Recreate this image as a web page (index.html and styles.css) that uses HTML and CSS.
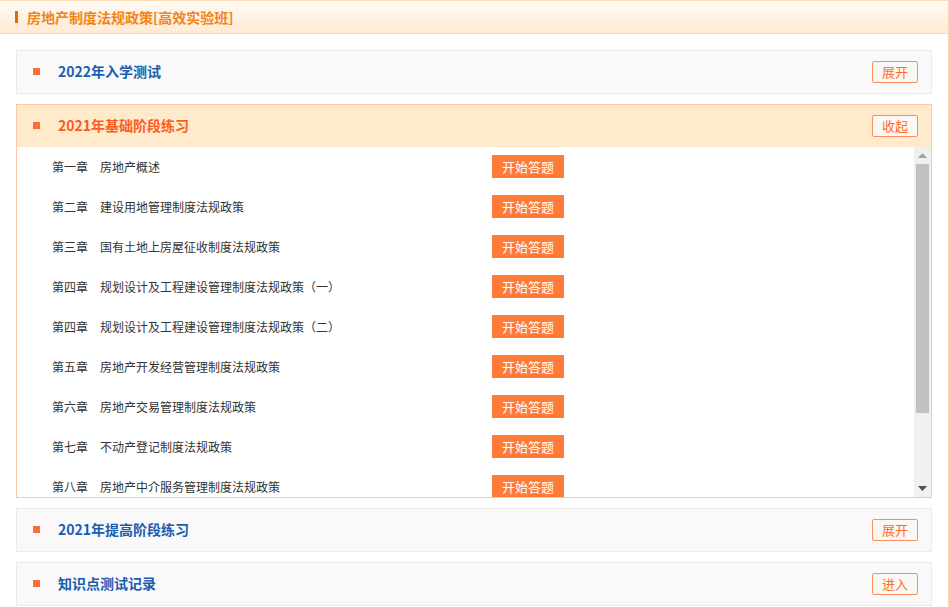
FILE: index.html
```html
<!DOCTYPE html>
<html lang="zh-CN">
<head>
<meta charset="utf-8">
<title>房地产制度法规政策[高效实验班]</title>
<link rel="stylesheet" href="styles.css">
</head>
<body>
<div class="page">
  <div class="page-head">
    <span class="head-bar"></span>
    <span class="head-title">房地产制度法规政策[高效实验班]</span>
  </div>
  <div class="content">
    <div class="section">
      <div class="sec-head">
        <span class="dot"></span>
        <span class="sec-title">2022年入学测试</span>
        <span class="sec-btn">展开</span>
      </div>
    </div>

    <div class="section open">
      <div class="sec-head">
        <span class="dot"></span>
        <span class="sec-title">2021年基础阶段练习</span>
        <span class="sec-btn">收起</span>
      </div>
      <div class="list-wrap">
        <div class="list">
          <div class="row"><span class="chap">第一章</span><span class="name">房地产概述</span><span class="go">开始答题</span></div>
          <div class="row"><span class="chap">第二章</span><span class="name">建设用地管理制度法规政策</span><span class="go">开始答题</span></div>
          <div class="row"><span class="chap">第三章</span><span class="name">国有土地上房屋征收制度法规政策</span><span class="go">开始答题</span></div>
          <div class="row"><span class="chap">第四章</span><span class="name">规划设计及工程建设管理制度法规政策（一）</span><span class="go">开始答题</span></div>
          <div class="row"><span class="chap">第四章</span><span class="name">规划设计及工程建设管理制度法规政策（二）</span><span class="go">开始答题</span></div>
          <div class="row"><span class="chap">第五章</span><span class="name">房地产开发经营管理制度法规政策</span><span class="go">开始答题</span></div>
          <div class="row"><span class="chap">第六章</span><span class="name">房地产交易管理制度法规政策</span><span class="go">开始答题</span></div>
          <div class="row"><span class="chap">第七章</span><span class="name">不动产登记制度法规政策</span><span class="go">开始答题</span></div>
          <div class="row"><span class="chap">第八章</span><span class="name">房地产中介服务管理制度法规政策</span><span class="go">开始答题</span></div>
        </div>
        <div class="scrollbar">
          <div class="sb-btn">
            <svg width="9" height="5" viewBox="0 0 9 5"><polygon points="4.5,0 9,5 0,5" fill="#a3a3a3"/></svg>
          </div>
          <div class="sb-track">
            <div class="sb-thumb"></div>
          </div>
          <div class="sb-btn">
            <svg width="9" height="5" viewBox="0 0 9 5"><polygon points="0,0 9,0 4.5,5" fill="#505050"/></svg>
          </div>
        </div>
      </div>
    </div>

    <div class="section">
      <div class="sec-head">
        <span class="dot"></span>
        <span class="sec-title">2021年提高阶段练习</span>
        <span class="sec-btn">展开</span>
      </div>
    </div>

    <div class="section">
      <div class="sec-head">
        <span class="dot"></span>
        <span class="sec-title">知识点测试记录</span>
        <span class="sec-btn">进入</span>
      </div>
    </div>
  </div>
</div>
</body>
</html>
```

FILE: styles.css
```css
html, body {
  margin: 0;
  padding: 0;
  background: #ffffff;
}
body {
  font-family: "Noto Sans CJK SC", "Noto Sans", sans-serif;
  color: #333333;
  overflow: hidden;
}
.page {
  width: 948px;
  height: 607px;
  border-right: 1px solid #fcd9b6;
}
.page-head {
  height: 32px;
  box-sizing: content-box;
  border-top: 1px solid #fdd8b4;
  border-bottom: 1px solid #fcd6b2;
  background: linear-gradient(#fffaf4, #ffe9d4);
  display: flex;
  align-items: center;
  padding-left: 15px;
}
.head-bar {
  width: 3px;
  height: 12px;
  background: #e06c00;
  margin-right: 9px;
}
.head-title {
  font-size: 14px;
  font-weight: bold;
  color: #f08518;
  margin-bottom: 1px;
}
.content {
  padding: 16px 16px 0 16px;
  display: flex;
  flex-direction: column;
  gap: 10px;
}
.section {
  border: 1px solid #ebebeb;
  background: #f9f9f9;
}
.sec-head {
  height: 42px;
  box-sizing: border-box;
  display: flex;
  align-items: center;
  padding: 0 13px 1px 16px;
}
.dot {
  width: 7px;
  height: 7px;
  background: #ff6a36;
  margin-right: 18px;
  flex: none;
}
.sec-title {
  font-size: 14px;
  font-weight: bold;
  color: #1a5daf;
  flex: 1;
  margin-bottom: 1px;
}
.sec-btn {
  width: 44px;
  height: 20px;
  line-height: 20px;
  text-align: center;
  border: 1px solid #ff8c5e;
  border-radius: 2px;
  background: #faf8f2;
  color: #ff6a2c;
  font-size: 13px;
}
.section.open {
  border-color: #fbc8a6;
  background: #ffffff;
}
.section.open .sec-head {
  background: #ffebcc;
}
.section.open .sec-title {
  color: #ff5a1e;
}
.list-wrap {
  height: 350px;
  display: flex;
  background: #ffffff;
}
.list {
  flex: 1;
  overflow: hidden;
}
.row {
  height: 40px;
  box-sizing: border-box;
  display: flex;
  align-items: center;
  padding: 0 0 2px 35px;
  font-size: 12px;
  color: #333333;
}
.chap {
  width: 48px;
  flex: none;
}
.name {
  width: 392px;
  flex: none;
}
.go {
  width: 72px;
  height: 23px;
  line-height: 23px;
  text-align: center;
  background: #ff7b38;
  color: #ffffff;
  font-size: 13px;
}
.scrollbar {
  width: 17px;
  flex: none;
  background: #f0f0f0;
  display: flex;
  flex-direction: column;
}
.sb-btn {
  height: 17px;
  flex: none;
  display: flex;
  align-items: center;
  justify-content: center;
}
.sb-track {
  flex: 1;
  padding: 0 2px;
}
.sb-thumb {
  height: 249px;
  background: #c1c1c1;
}
```
